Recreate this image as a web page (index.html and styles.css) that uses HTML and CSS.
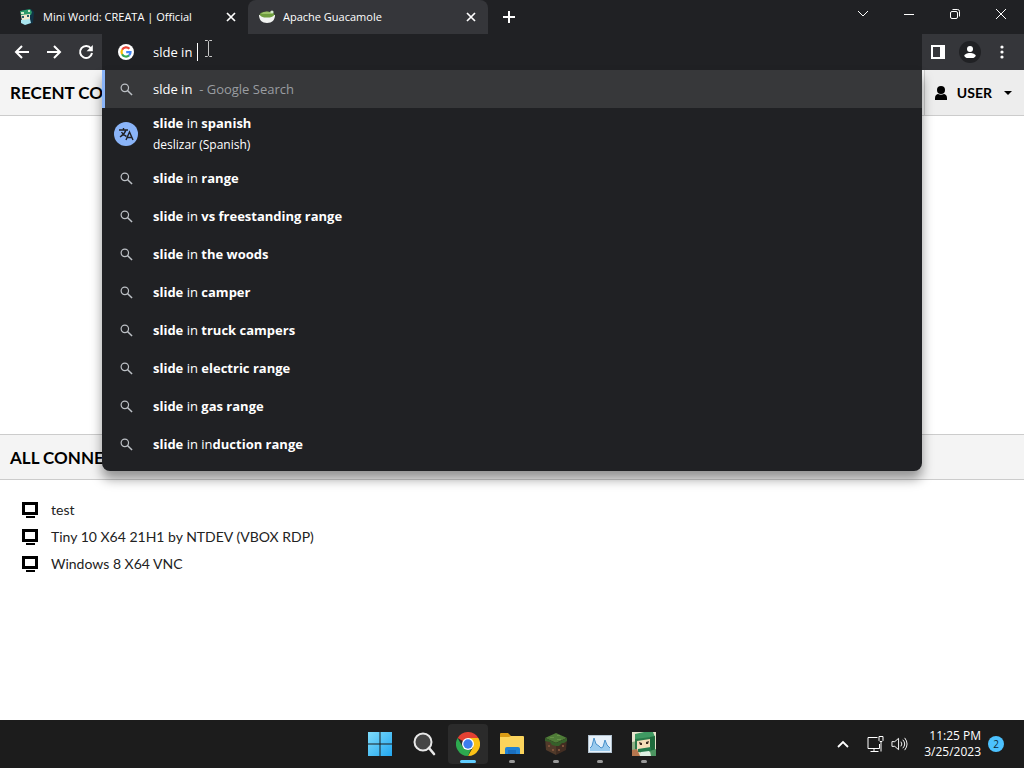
FILE: index.html
```html
<!DOCTYPE html>
<html lang="en">

<head>
  <meta charset="UTF-8">
  <meta name="viewport" content="width=device-width, initial-scale=1">
  <title>Apache Guacamole</title>
  <link rel="stylesheet" href="styles.css">
</head>

<body>

  <svg class="symbols" aria-hidden="true">
    <symbol id="close" viewBox="0 0 10 10">
      <path d="M1 1l8 8M9 1l-8 8" fill="none" stroke="currentColor" stroke-width="1.7"/>
    </symbol>
    <symbol id="search" viewBox="0 0 14 14">
      <circle cx="5.2" cy="5.2" r="4" fill="none" stroke="currentColor" stroke-width="1.3"/>
      <path d="M8 8l5 5" stroke="currentColor" stroke-width="1.6"/>
    </symbol>
    <symbol id="monitor" viewBox="0 0 16 16">
      <path d="M0 0h16v13H0zM3 3v7h10V3z" fill="#000" fill-rule="evenodd"/>
      <path d="M4 14h9v2H4z" fill="#000"/>
    </symbol>
    <symbol id="mini-world" viewBox="0 0 24 24">
      <path d="M0 0h24v24H0z" fill="#e6e3cc"/>
      <path d="M0 10l5-1v9l-5 2z" fill="#8fae84"/>
      <path d="M3 2l9-2h9l2 5-17 3-3-1z" fill="#3f9a62"/>
      <path d="M3 7l16-2v3L5 10v8l-2-1z" fill="#2a7a49"/>
      <path d="M5 9l13-2v9L6 17z" fill="#f3dcb8"/>
      <path d="M18 5l5-1v14l-5 2z" fill="#1e6a3c"/>
      <path d="M7 10l3 1v2H8zM17 9l-3 1v2h2z" fill="#3b2a20"/>
      <path d="M6 17l13-2v4l-5 2-8-1z" fill="#23794a"/>
      <path d="M0 18l5-1 3 7H0z" fill="#b5764e"/>
      <path d="M9 20l8-1 2 5H8z" fill="#dff0e4"/>
      <path d="M18 19l6-2v7h-5z" fill="#4d9561"/>
    </symbol>
  </svg>

  <header class="browser">
    <div class="tab-strip">
      <div class="tab">
        <svg class="favicon" viewBox="0 0 16 16">
          <path d="M3 1l9-1 3 3-1 11-8 2-4-4z" fill="#103447"/>
          <path d="M1 2l10-2 2 3-1 3-10 1z" fill="#2c9a69"/>
          <path d="M2 6l9-1v6l-8 1z" fill="#f2e8cd"/>
          <path d="M3 7h2v2H3zM8 6h2v2H8z" fill="#29606a"/>
          <path d="M2 11l9-1 1 4-6 2-4-2z" fill="#a9e4ee"/>
          <path d="M2 3h3v2H2zM9 1h2v2H9z" fill="#d3edca"/>
        </svg>
        <span class="tab-title">Mini World: CREATA | Official</span>
        <button class="tab-close" aria-label="Close tab"><svg><use href="#close"/></svg></button>
      </div>
      <div class="tab active">
        <svg class="favicon" viewBox="0 0 16 16">
          <path d="M0 6h16c0 5-3 8-8 8S0 11 0 6z" fill="#f1f3f1"/>
          <ellipse cx="8" cy="5.6" rx="7.4" ry="2.9" fill="#6f9e3f"/>
          <path d="M2 5c2-3 7-3 9-2l2-1-1 3z" fill="#9bc167"/>
          <circle cx="13" cy="3" r="1.6" fill="#d5ead0"/>
        </svg>
        <span class="tab-title">Apache Guacamole</span>
        <button class="tab-close" aria-label="Close tab"><svg><use href="#close"/></svg></button>
      </div>
      <button class="new-tab" aria-label="New tab">
        <svg viewBox="0 0 12 12"><path d="M6 0v12M0 6h12" stroke="#fff" stroke-width="2"/></svg>
      </button>
      <div class="window-controls">
        <button aria-label="Search tabs"><svg viewBox="0 0 12 12"><path d="M1 3l5 5 5-5"/></svg></button>
        <button aria-label="Minimize"><svg viewBox="0 0 12 12"><path d="M1 6.500h10"/></svg></button>
        <button aria-label="Restore"><svg viewBox="0 0 12 12"><rect x="1.500" y="3.500" width="7" height="7" rx="1.500"/><path d="M3.500 1.500h5a2 2 0 0 1 2 2v5"/></svg></button>
        <button aria-label="Close"><svg viewBox="0 0 12 12"><path d="M1 1l10 10M11 1L1 11"/></svg></button>
      </div>
    </div>

    <div class="toolbar">
      <div class="nav">
        <button aria-label="Back"><svg viewBox="0 0 16 16"><path d="M15 8H2M8 2L2 8l6 6"/></svg></button>
        <button aria-label="Forward"><svg viewBox="0 0 16 16"><path d="M1 8h13M8 2l6 6-6 6"/></svg></button>
        <button aria-label="Reload"><svg viewBox="0 0 16 16"><path d="M13 4.500A6 6 0 1 0 14 9"/><path d="M14.800 1v6.200H8.600z" fill="#fff" stroke="none"/></svg></button>
      </div>

      <div class="omnibox">
        <div class="address">
          <svg class="google" viewBox="0 0 16 16">
            <circle cx="8" cy="8" r="8" fill="#fff"/>
            <g fill="none" stroke-width="2.200">
              <path d="M11.400 4.800A4.500 4.500 0 0 0 4.100 5.800" stroke="#ea4335"/>
              <path d="M4.100 5.800a4.500 4.500 0 0 0 0 4.400" stroke="#fbbc05"/>
              <path d="M4.100 10.200a4.500 4.500 0 0 0 7 1.200" stroke="#34a853"/>
              <path d="M11.100 11.400A4.500 4.500 0 0 0 12.500 8.200H8.200" stroke="#4285f4"/>
            </g>
          </svg>
          <input type="text" class="address-input" aria-label="Address and search bar" value="slde in ">
          <span class="caret"></span>
          <svg class="pointer" viewBox="0 0 9 17"><path d="M1 .5h2.500l1 1 1-1H8M1 16.500h2.500l1-1 1 1H8M4.500 1.500v14" fill="none" stroke="#c8c8c8"/></svg>
        </div>
        <ul class="suggestions">
          <li><button class="suggestion selected"><svg><use href="#search"/></svg><span>slde in <i>&nbsp;- Google Search</i></span></button></li>
          <li>
            <button class="suggestion answer">
              <svg class="translate" viewBox="0 0 24 24">
                <circle cx="12" cy="12" r="12" fill="#8ab4f8"/>
                <g fill="none" stroke="#202124" stroke-width="1.400">
                  <path d="M5 8h9M9.500 6v2M12 8c-1 3-3 5-6 7M7.500 10c1 2 3 3.500 5 4.500"/>
                  <path d="M12 18l3.500-8 3.500 8M13.200 15.500h4.600"/>
                </g>
              </svg>
              <span class="answer-text">
                <span><b>slide</b> in <b>spanish</b></span>
                <span class="translation">deslizar (Spanish)</span>
              </span>
            </button>
          </li>
          <li><button class="suggestion"><svg><use href="#search"/></svg><span><b>slide</b> in <b>range</b></span></button></li>
          <li><button class="suggestion"><svg><use href="#search"/></svg><span><b>slide</b> in <b>vs freestanding range</b></span></button></li>
          <li><button class="suggestion"><svg><use href="#search"/></svg><span><b>slide</b> in <b>the woods</b></span></button></li>
          <li><button class="suggestion"><svg><use href="#search"/></svg><span><b>slide</b> in <b>camper</b></span></button></li>
          <li><button class="suggestion"><svg><use href="#search"/></svg><span><b>slide</b> in <b>truck campers</b></span></button></li>
          <li><button class="suggestion"><svg><use href="#search"/></svg><span><b>slide</b> in <b>electric range</b></span></button></li>
          <li><button class="suggestion"><svg><use href="#search"/></svg><span><b>slide</b> in <b>gas range</b></span></button></li>
          <li><button class="suggestion"><svg><use href="#search"/></svg><span><b>slide</b> in in<b>duction range</b></span></button></li>
        </ul>
      </div>

      <div class="actions">
        <button aria-label="Side panel"><svg viewBox="0 0 14 14"><path d="M0 0h14v14H0zM2 2v10h7V2z" fill="#fff" fill-rule="evenodd"/></svg></button>
        <button class="profile" aria-label="Profile"><svg viewBox="0 0 14 14"><circle cx="7" cy="4" r="3" fill="#fff"/><path d="M1 13v-1c0-3 3-4 6-4s6 1 6 4v1z" fill="#fff"/></svg></button>
        <button aria-label="Menu"><svg viewBox="0 0 14 14" fill="#fff"><circle cx="7" cy="2" r="1.600"/><circle cx="7" cy="7" r="1.600"/><circle cx="7" cy="12" r="1.600"/></svg></button>
      </div>
    </div>
  </header>

  <main class="page">
    <div class="section-header">
      <h2>RECENT CONNECTIONS</h2>
      <button class="user-menu">
        <svg class="user-icon" viewBox="0 0 14 14"><circle cx="7" cy="4" r="4"/><path d="M1 14v-2c0-3 2-4 3-4 2 1 4 1 6 0 1 0 3 1 3 4v2z"/></svg>
        USER
        <svg class="arrow" viewBox="0 0 8 4"><path d="M0 0h8L4 4z"/></svg>
      </button>
    </div>
    <div class="recent"></div>
    <div class="section-header">
      <h2>ALL CONNECTIONS</h2>
    </div>
    <ul class="connections">
      <li><a href="#"><svg><use href="#monitor"/></svg>test</a></li>
      <li><a href="#"><svg><use href="#monitor"/></svg>Tiny 10 X64 21H1 by NTDEV (VBOX RDP)</a></li>
      <li><a href="#"><svg><use href="#monitor"/></svg>Windows 8 X64 VNC</a></li>
    </ul>
  </main>

  <footer class="taskbar">
    <div class="apps">
      <button aria-label="Start">
        <svg viewBox="0 0 24 24">
          <defs><linearGradient id="win" x2="1" y2="1"><stop stop-color="#7fdcfb"/><stop offset="1" stop-color="#22a7f0"/></linearGradient></defs>
          <path d="M0 0h11.500v11.500H0zM12.500 0H24v11.500H12.500zM0 12.500h11.500V24H0zM12.500 12.500H24V24H12.500z" fill="url(#win)"/>
        </svg>
      </button>
      <button aria-label="Search">
        <svg viewBox="0 0 24 24"><circle cx="11" cy="10" r="8.500" fill="#454545" stroke="#e8e8e8" stroke-width="2"/><path d="M17 16l5 6" stroke="#e8e8e8" stroke-width="2.600" stroke-linecap="round"/></svg>
      </button>
      <button class="focused" aria-label="Google Chrome">
        <svg viewBox="0 0 24 24">
          <path d="M12 12L1.600 6a12 12 0 0 1 20.800 0z" fill="#e34133"/>
          <path d="M12 12V6h10.400A12 12 0 0 1 12 24l5.200-9z" fill="#fbc116"/>
          <path d="M1.600 6l5.200 9 5.200 3 3-1-3 7A12 12 0 0 1 1.600 6z" fill="#2da94f"/>
          <circle cx="12" cy="12" r="6" fill="#fff"/>
          <circle cx="12" cy="12" r="4.700" fill="#3b7ded"/>
        </svg>
      </button>
      <button class="running" aria-label="File Explorer">
        <svg viewBox="0 0 24 24">
          <path d="M0 2q0-1 1-1h7l3 3v4H0z" fill="#d99b15"/>
          <path d="M0 5h9l2-1h12q1 0 1 1v17H0z" fill="#fbd45c"/>
          <path d="M5 17q0-2 2-2h11q2 0 2 2v5H5z" fill="#2082d4"/>
          <path d="M8 18h8v4H8z" fill="#1a6fc0"/>
        </svg>
      </button>
      <button class="running" aria-label="Minecraft">
        <svg viewBox="0 0 24 24">
          <path d="M12 1l11 5-11 5L1 6z" fill="#4f7c38"/>
          <path d="M1 6l11 5v12L2 18z" fill="#513a2a"/>
          <path d="M23 6l-11 5v12l10-5z" fill="#422d22"/>
          <path d="M1 6l11 5 11-5v3l-3 2-2 0-3 3-3 0-4-1-2-3-5-1z" fill="#36602a"/>
          <path d="M4 13h2v2H4zM8 17h2v2H8zM14 17h2v2h-2zM18 13h2v2h-2z" fill="#7c513a"/>
          <path d="M6 5h4v1H6zM13 3h3v1h-3zM13 7h4v1h-4z" fill="#669248"/>
        </svg>
      </button>
      <button class="running" aria-label="Resource Monitor">
        <svg viewBox="0 0 24 24">
          <path d="M0 3h24v18H0z" fill="#b3c3d0"/>
          <path d="M1 4h22v16H1z" fill="#e6f1fa"/>
          <path d="M2 19v-3l2-2 2-8 2 6 3 2 2 2 2-1 2-7 2 5 3 3v3z" fill="#9acbee"/>
          <path d="M2 16l2-2 2-8 2 6 3 2 2 2 2-1 2-7 2 5 3 3" fill="none" stroke="#4890ca"/>
        </svg>
      </button>
      <button class="running" aria-label="Mini World">
        <svg><use href="#mini-world"/></svg>
      </button>
    </div>
    <div class="tray">
      <button class="tray-up" aria-label="Show hidden icons"><svg viewBox="0 0 12 12"><path d="M1 9l5-5 5 5" stroke-width="1.800"/></svg></button>
      <button class="status" aria-label="Network and volume">
        <svg viewBox="0 0 16 16"><path d="M10 1.500H.5v11H12V8M3 15.500h8M6.500 12.500v3M11.500.5h4v4l-1 1h-2l-1-1zM13.500 5.500v10"/></svg>
        <svg viewBox="0 0 18 16"><path d="M1 5.500h3l4-3.500v12l-4-3.500H1zM10.500 5.500q2 2.500 0 5M12.500 3.500q4 4.500 0 9M14.500 1.500q5 6.500 0 13"/></svg>
      </button>
      <button class="clock">11:25 PM<br>3/25/2023</button>
      <span class="badge">2</span>
    </div>
  </footer>

</body>

</html>
```

FILE: styles.css
```css
* {
  box-sizing: border-box;
}

body {
  display: flex;
  flex-direction: column;
  min-height: 100vh;
  margin: 0;
  background-color: #fff;
  font-family: "Open Sans", "Noto Sans", sans-serif;
  font-size: 13px;
}

button {
  display: flex;
  align-items: center;
  justify-content: center;
  padding: 0;
  border: 0;
  background: none;
  color: #fff;
  font: inherit;
}

svg {
  flex: none;
}

ul {
  margin: 0;
  padding: 0;
  list-style: none;
}

.symbols {
  position: absolute;
  width: 0;
  height: 0;
}

/* Tabs */
.tab-strip {
  display: flex;
  height: 34px;
  padding-left: 8px;
  background-color: #202124;
  color: #fff;
}

.tab {
  display: flex;
  align-items: center;
  width: 240px;
  padding: 0 12px 0 11px;
  font-size: 11px;
}

.tab.active {
  border-radius: 8px 8px 0 0;
  background-color: #35363a;
}

.favicon {
  width: 16px;
  height: 16px;
  margin-right: 8px;
}

.tab-title {
  flex: 1;
  padding-bottom: 2px;
  white-space: nowrap;
}

.tab-close svg {
  width: 10px;
  height: 10px;
}

.new-tab {
  width: 42px;
}

.new-tab svg {
  width: 12px;
  height: 12px;
}

.window-controls {
  display: flex;
  height: 28px;
  margin-left: auto;
}

.window-controls button {
  width: 46px;
}

.window-controls svg {
  width: 12px;
  height: 12px;
  fill: none;
  stroke: #fff;
}

/* Toolbar */
.toolbar {
  display: flex;
  height: 36px;
  background-color: #35363a;
}

.nav {
  display: flex;
  width: 102px;
  padding-left: 6px;
}

.nav button {
  width: 32px;
}

.nav svg {
  width: 16px;
  height: 16px;
  fill: none;
  stroke: #fff;
  stroke-width: 2;
}

.omnibox {
  position: relative;
  flex: 1;
  background-color: #202124;
  color: #fff;
}

.address {
  display: flex;
  align-items: center;
  height: 36px;
  padding-left: 16px;
}

.google {
  width: 16px;
  height: 16px;
  margin-right: 19px;
}

.address-input {
  width: 44px;
  padding: 0;
  border: 0;
  outline: 0;
  background: none;
  color: #fff;
  font: inherit;
}

.caret {
  width: 1px;
  height: 18px;
  background-color: #fff;
}

.pointer {
  width: 9px;
  height: 17px;
  margin: 0 0 8px 6px;
}

.suggestions {
  position: absolute;
  z-index: 1;
  top: 100%;
  left: 0;
  right: 0;
  padding-bottom: 8px;
  border-radius: 0 0 8px 8px;
  background-color: #202124;
  box-shadow: 0 8px 12px rgba(0, 0, 0, 0.4);
}

.suggestion {
  justify-content: flex-start;
  gap: 20px;
  width: 100%;
  height: 38px;
  padding-left: 18px;
  text-align: left;
}

.suggestion svg {
  width: 13px;
  height: 13px;
  color: #bdc1c6;
}

.suggestion.selected {
  padding-left: 15px;
  border-left: 3px solid #8ab4f8;
  background-color: #37383a;
}

.suggestion i {
  color: #9a9da1;
  font-style: normal;
}

.suggestion.answer {
  gap: 15px;
  height: 51px;
  padding-left: 12px;
}

.answer-text {
  display: flex;
  flex-direction: column;
  line-height: 22px;
}

.translation {
  font-size: 12px;
}

.suggestion .translate {
  width: 24px;
  height: 24px;
}

.actions {
  display: flex;
  align-items: center;
  width: 102px;
  padding-right: 6px;
}

.actions button {
  width: 32px;
}

.actions svg {
  width: 14px;
  height: 14px;
}

.actions .profile svg {
  box-sizing: content-box;
  padding: 4px;
  border-radius: 50%;
  background-color: #202124;
}

/* Guacamole home */
.page {
  flex: 1;
  font-family: Lato, sans-serif;
}

.section-header {
  display: flex;
  align-items: center;
  justify-content: space-between;
  height: 46px;
  border-top: 1px solid #ccc;
  border-bottom: 1px solid #ccc;
  background-color: #f4f4f4;
}

.section-header:first-child {
  border-top: 0;
}

h2 {
  margin: 0;
  padding-left: 10px;
  font-size: 17px;
  font-weight: bold;
}

.user-menu {
  height: 100%;
  padding: 0 12px 0 9px;
  border-left: 1px solid #ccc;
  background-color: #ededed;
  color: #000;
  font-size: 14px;
  font-weight: bold;
}

.user-icon {
  width: 14px;
  height: 14px;
  margin-right: 9px;
}

.arrow {
  width: 8px;
  height: 4px;
  margin-left: 12px;
}

.recent {
  height: 318px;
}

.connections {
  padding: 16px 22px;
}

.connections a {
  display: flex;
  align-items: center;
  gap: 13px;
  height: 27px;
  color: #222;
  font-size: 14px;
  text-decoration: none;
}

.connections svg {
  width: 16px;
  height: 16px;
}

/* Taskbar */
.taskbar {
  display: grid;
  grid-template-columns: 1fr auto 1fr;
  align-items: center;
  height: 48px;
  background-color: #1c1c1c;
}

.apps {
  display: flex;
  grid-column: 2;
  gap: 4px;
}

.apps button {
  position: relative;
  width: 40px;
  height: 40px;
  border-radius: 4px;
}

.apps svg {
  width: 24px;
  height: 24px;
}

.apps .focused {
  background-color: #2b2b2b;
}

.focused::after,
.running::after {
  content: "";
  position: absolute;
  bottom: 1px;
  width: 6px;
  height: 3px;
  border-radius: 2px;
  background-color: #999;
}

.focused::after {
  width: 16px;
  background-color: #60cdff;
}

.tray {
  display: flex;
  align-items: center;
  justify-content: flex-end;
  padding-right: 20px;
}

.tray svg {
  height: 16px;
  fill: none;
  stroke: #fff;
}

.tray-up svg {
  width: 12px;
}

.status {
  gap: 7px;
  margin: 0 16px 0 18px;
}

.status svg {
  width: 17px;
}

.clock {
  font-size: 12px;
  line-height: 16px;
  text-align: right;
}

.badge {
  width: 16px;
  height: 16px;
  margin-left: 7px;
  border-radius: 50%;
  background-color: #4cc2ff;
  color: #0b2a3a;
  font-size: 10px;
  line-height: 16px;
  text-align: center;
}
```
